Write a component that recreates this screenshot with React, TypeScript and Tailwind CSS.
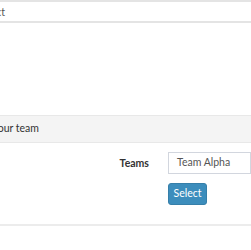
export default function App() {
  return (
    <div className="w-[251px] h-[250px] overflow-hidden bg-white font-['Lato','Open_Sans',sans-serif] text-[10.5px] text-[#333]">
      <div className="h-[23px] pt-[2px] border-t-2 border-b-2 border-[#e4e4e4] flex items-center overflow-hidden">
        <span className="-ml-[23px] text-[#555] whitespace-nowrap">Select</span>
      </div>

      <div className="h-[92px]" />

      <div className="h-[28px] bg-[#f4f4f4] border-t border-b border-[#e8e8e8] flex items-center overflow-hidden">
        <span className="-ml-[38px] whitespace-nowrap text-[#333]">Select your team</span>
      </div>

      <div className="pt-[9px] pb-[19px] border-b-2 border-[#ececec]">
        <div className="flex items-center">
          <label className="w-[150px] pr-[1px] pt-[2px] text-right font-bold text-[#333]">Teams</label>
          <div className="ml-[18px] flex-1 h-[22px] border border-[#d2d6de] flex items-center pl-[8px] text-[#555]">
            Team Alpha
          </div>
        </div>
        <div className="pl-[168px] mt-[9px]">
          <button className="w-[39px] h-[22px] rounded-[3px] bg-[#3c8dbc] border border-[#367fa9] text-white">
            Select
          </button>
        </div>
      </div>
    </div>
  )
}
